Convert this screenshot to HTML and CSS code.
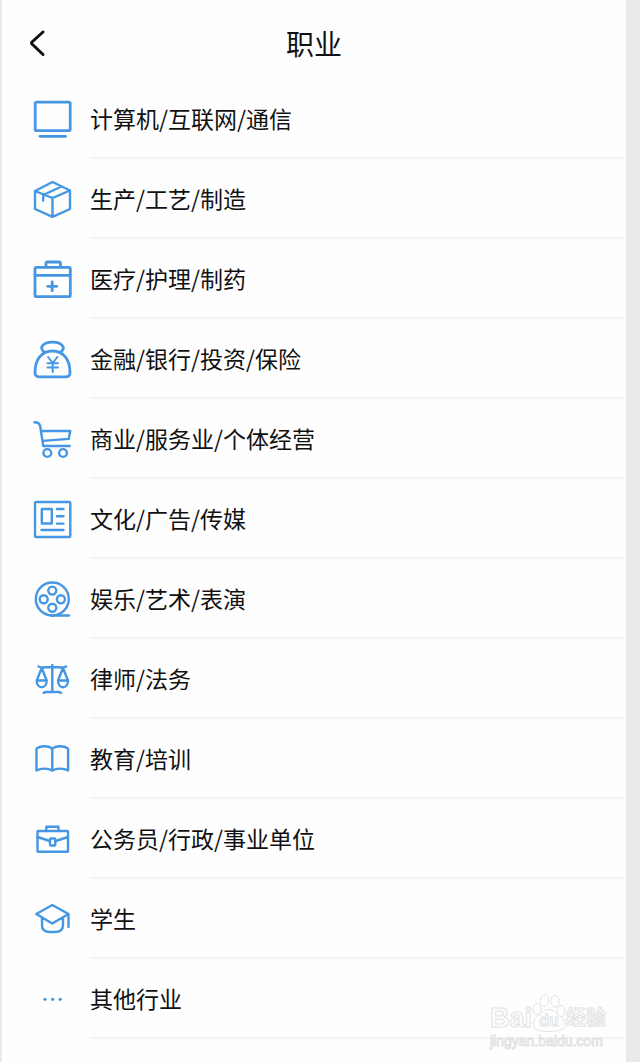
FILE: index.html
```html
<!DOCTYPE html>
<html lang="zh-CN">
<head>
    <meta charset="UTF-8">
    <meta name="viewport" content="width=device-width, initial-scale=1.0">
    <title>职业</title>
    <link rel="stylesheet" href="styles.css">
</head>
<body>
    <div class="page">
        <header class="header">
            <button class="back" type="button" aria-label="返回">
                <svg viewBox="0 0 28 28"><path d="M21 3 10 13q-1 1 0 2L21 25.500"/></svg>
            </button>
            <h1>职业</h1>
        </header>

        <ul class="list">
            <li>
                <a href="#">
                    <svg class="icon" viewBox="0 0 40 40"><rect x="3.200" y="3.200" width="35" height="28.500" rx="1.500"/><path d="M8 37.300h25.500"/></svg>
                    <span class="label">计算机/互联网/通信</span>
                </a>
            </li>
            <li>
                <a href="#">
                    <svg class="icon thin" viewBox="0 0 40 40"><path d="M20.500 3 38 11.500V30L20.500 37.800 3 30V12zM3 12l17.500 7L38 11.500M20.500 19v18.500M29.500 7.500l-18.300 8.500v5.500"/></svg>
                    <span class="label">生产/工艺/制造</span>
                </a>
            </li>
            <li>
                <a href="#">
                    <svg class="icon" viewBox="0 0 40 40"><rect x="3" y="8.300" width="35.300" height="29.400" rx="1.500"/><path d="M14 8V4.500q0-1.500 1.500-1.500h11.500q1.500 0 1.500 1.500V8M3 16.300h35M20.200 22.800v9M15.700 27.300h9"/></svg>
                    <span class="label">医疗/护理/制药</span>
                </a>
            </li>
            <li>
                <a href="#">
                    <svg class="icon" viewBox="0 0 40 40"><path d="M12.500 13.500C10 11 9 9.500 9.800 8 12.500 1.500 28.500 1.500 31.200 8c.8 1.500-.2 3-2.700 5.500M3 33.500C3 20 10 12 20.500 12S38 20 38 33.500c0 3-1.500 4.300-4 4.300H7c-2.500 0-4-1.300-4-4.300z"/><path class="yen" d="M16 18l4.700 6 4.700-6M15.500 24.200h10.500M15.500 28.500h10.500M20.700 24v9"/></svg>
                    <span class="label">金融/银行/投资/保险</span>
                </a>
            </li>
            <li>
                <a href="#">
                    <svg class="icon thin" viewBox="0 0 40 40"><path d="M2.500 3.200q5 0 5.700 4L11.300 27h26.400M8.800 12h29.500l-1.600 7.900-26 2"/><circle cx="15.300" cy="34" r="3.900"/><circle cx="31" cy="34" r="3.900"/></svg>
                    <span class="label">商业/服务业/个体经营</span>
                </a>
            </li>
            <li>
                <a href="#">
                    <svg class="icon thin" viewBox="0 0 40 40"><rect x="3" y="3" width="35.300" height="35" rx="1"/><rect x="9.800" y="10" width="10" height="14.500"/><path d="M25 10h6.500M25 17.300h6.500M25 24.600h6.500M9.500 31h22"/></svg>
                    <span class="label">文化/广告/传媒</span>
                </a>
            </li>
            <li>
                <a href="#">
                    <svg class="icon thin" viewBox="0 0 40 40"><circle cx="20.300" cy="20" r="16.500"/><circle cx="20.300" cy="11.600" r="4"/><circle cx="11.700" cy="20.200" r="4"/><circle cx="28.900" cy="20.200" r="4"/><circle cx="20.300" cy="28.800" r="4"/><path d="M19 36.500h18"/></svg>
                    <span class="label">娱乐/艺术/表演</span>
                </a>
            </li>
            <li>
                <a href="#">
                    <svg class="icon thin" viewBox="0 0 40 40"><path d="M20.300 6v27M6.500 7.500q3 1.500 6 .8h15.600q3 .7 6-.8M11.500 34q1-1 3-1h11.600q2 0 3 1M9.700 9 4.700 21.500h10zM4.700 21.500c0 9 10 9 10 0M31 9l-5 12.500h10zM26 21.500c0 9 10 9 10 0"/></svg>
                    <span class="label">律师/法务</span>
                </a>
            </li>
            <li>
                <a href="#">
                    <svg class="icon thin" viewBox="0 0 40 40"><path d="M20.300 9.500C16 6.500 9 6.500 4.500 9.500v22c4.500-2.500 11.500-2.500 15.800 0 4.300-2.500 11.300-2.500 15.800 0v-22C31.600 6.500 24.600 6.500 20.300 9.500zv22"/></svg>
                    <span class="label">教育/培训</span>
                </a>
            </li>
            <li>
                <a href="#">
                    <svg class="icon thin" viewBox="0 0 40 40"><rect x="5.500" y="12" width="30.500" height="20.800" rx=".5"/><path d="M14.300 12V7.700h12.200V12M5.500 18l12.300 4M36 18l-12.500 4"/><rect x="18" y="19.500" width="5.300" height="7" rx="1"/></svg>
                    <span class="label">公务员/行政/事业单位</span>
                </a>
            </li>
            <li>
                <a href="#">
                    <svg class="icon thin" viewBox="0 0 40 40"><path d="M20.300 6 36.500 15 20.300 24.500 4.300 15zM10 19v7q0 7 8 7h5q8 0 8-7v-7M36.500 15v13"/></svg>
                    <span class="label">学生</span>
                </a>
            </li>
            <li>
                <a href="#">
                    <svg class="icon dots" viewBox="0 0 40 40"><circle cx="13" cy="20.300" r="1.600"/><circle cx="20.600" cy="20.300" r="1.600"/><circle cx="28.200" cy="20.300" r="1.600"/></svg>
                    <span class="label">其他行业</span>
                </a>
            </li>
        </ul>

        <div class="watermark">
            <div class="brand">
                <span class="latin">Bai</span>
                <span class="paw">
                    <svg viewBox="0 0 34 38"><ellipse cx="5" cy="15" rx="4" ry="5.500"/><ellipse cx="12.500" cy="6.500" rx="4.200" ry="6"/><ellipse cx="23" cy="7" rx="4.200" ry="6"/><ellipse cx="29" cy="17" rx="4" ry="5.500"/><path d="M17 15.500c-5 0-6.500 3-10 6-4 3-6.500 5.500-5.500 10s5 6 15.500 6 14.500-1.500 15.500-6-1.500-7-5.500-10c-3.500-3-5-6-10-6z"/></svg>
                    <span class="du">du</span>
                </span>
                <span class="cjk">经验</span>
            </div>
            <div class="url">jingyan.baidu.com</div>
        </div>
    </div>
</body>
</html>
```
FILE: styles.css
```css
* {
    box-sizing: border-box;
}
body {
    margin: 0;
    font-family: "Noto Sans CJK SC", sans-serif;
    color: #111;
    background-color: #fefefe;
}
.page {
    position: relative;
    min-height: 100vh;
    border-left: 2px solid #e9e9eb;
    border-right: 14px solid #ebe9ec;
    overflow: hidden;
}
.header {
    display: grid;
    grid-template-columns: 48px 1fr 48px;
    align-items: center;
    height: 79px;
    padding: 6px 20px 0;
}
.header h1 {
    margin: 0;
    font-size: 28px;
    line-height: 40px;
    font-weight: 400;
    text-align: center;
}
.back {
    display: flex;
    width: 28px;
    height: 28px;
    padding: 0;
    border: none;
    background: none;
    cursor: pointer;
}
.back svg {
    width: 28px;
    height: 28px;
    fill: none;
    stroke: #111;
    stroke-width: 3;
    stroke-linecap: round;
}
.list {
    margin: 0;
    padding: 0;
    list-style: none;
}
.list a {
    display: flex;
    align-items: center;
    gap: 18px;
    height: 80px;
    padding-left: 30px;
    color: inherit;
    text-decoration: none;
}
.icon {
    flex: none;
    width: 40px;
    height: 40px;
    fill: none;
    stroke: #4596e3;
    stroke-width: 2.8;
    stroke-linecap: round;
    stroke-linejoin: round;
}
.icon.thin {
    stroke-width: 2.4;
}
.icon .yen {
    stroke-width: 2;
}
.icon.dots {
    fill: #4596e3;
    stroke: none;
}
.label {
    flex: 1;
    height: 80px;
    border-bottom: 2px solid #f5f3f6;
    font-size: 23px;
    line-height: 78px;
}

/* site mark in the bottom corner */
.watermark {
    position: absolute;
    right: 20px;
    bottom: 12px;
    color: #fefefe;
    font-family: "Liberation Sans", "Noto Sans CJK SC", sans-serif;
    -webkit-text-stroke: 1px #e2e2e2;
    pointer-events: none;
}
.brand {
    display: flex;
    align-items: flex-end;
}
.latin {
    font-size: 27px;
    line-height: 28px;
    font-weight: 700;
}
.paw {
    display: grid;
    width: 34px;
    height: 38px;
}
.paw svg,
.du {
    grid-area: 1 / 1;
}
.paw svg {
    width: 34px;
    height: 38px;
    fill: #fefefe;
    stroke: #e2e2e2;
}
.du {
    align-self: end;
    font-size: 16px;
    line-height: 22px;
    font-weight: 700;
    text-align: center;
}
.cjk {
    font-size: 20px;
    line-height: 28px;
    font-weight: 700;
}
.url {
    font-size: 14px;
    line-height: 18px;
}
```
